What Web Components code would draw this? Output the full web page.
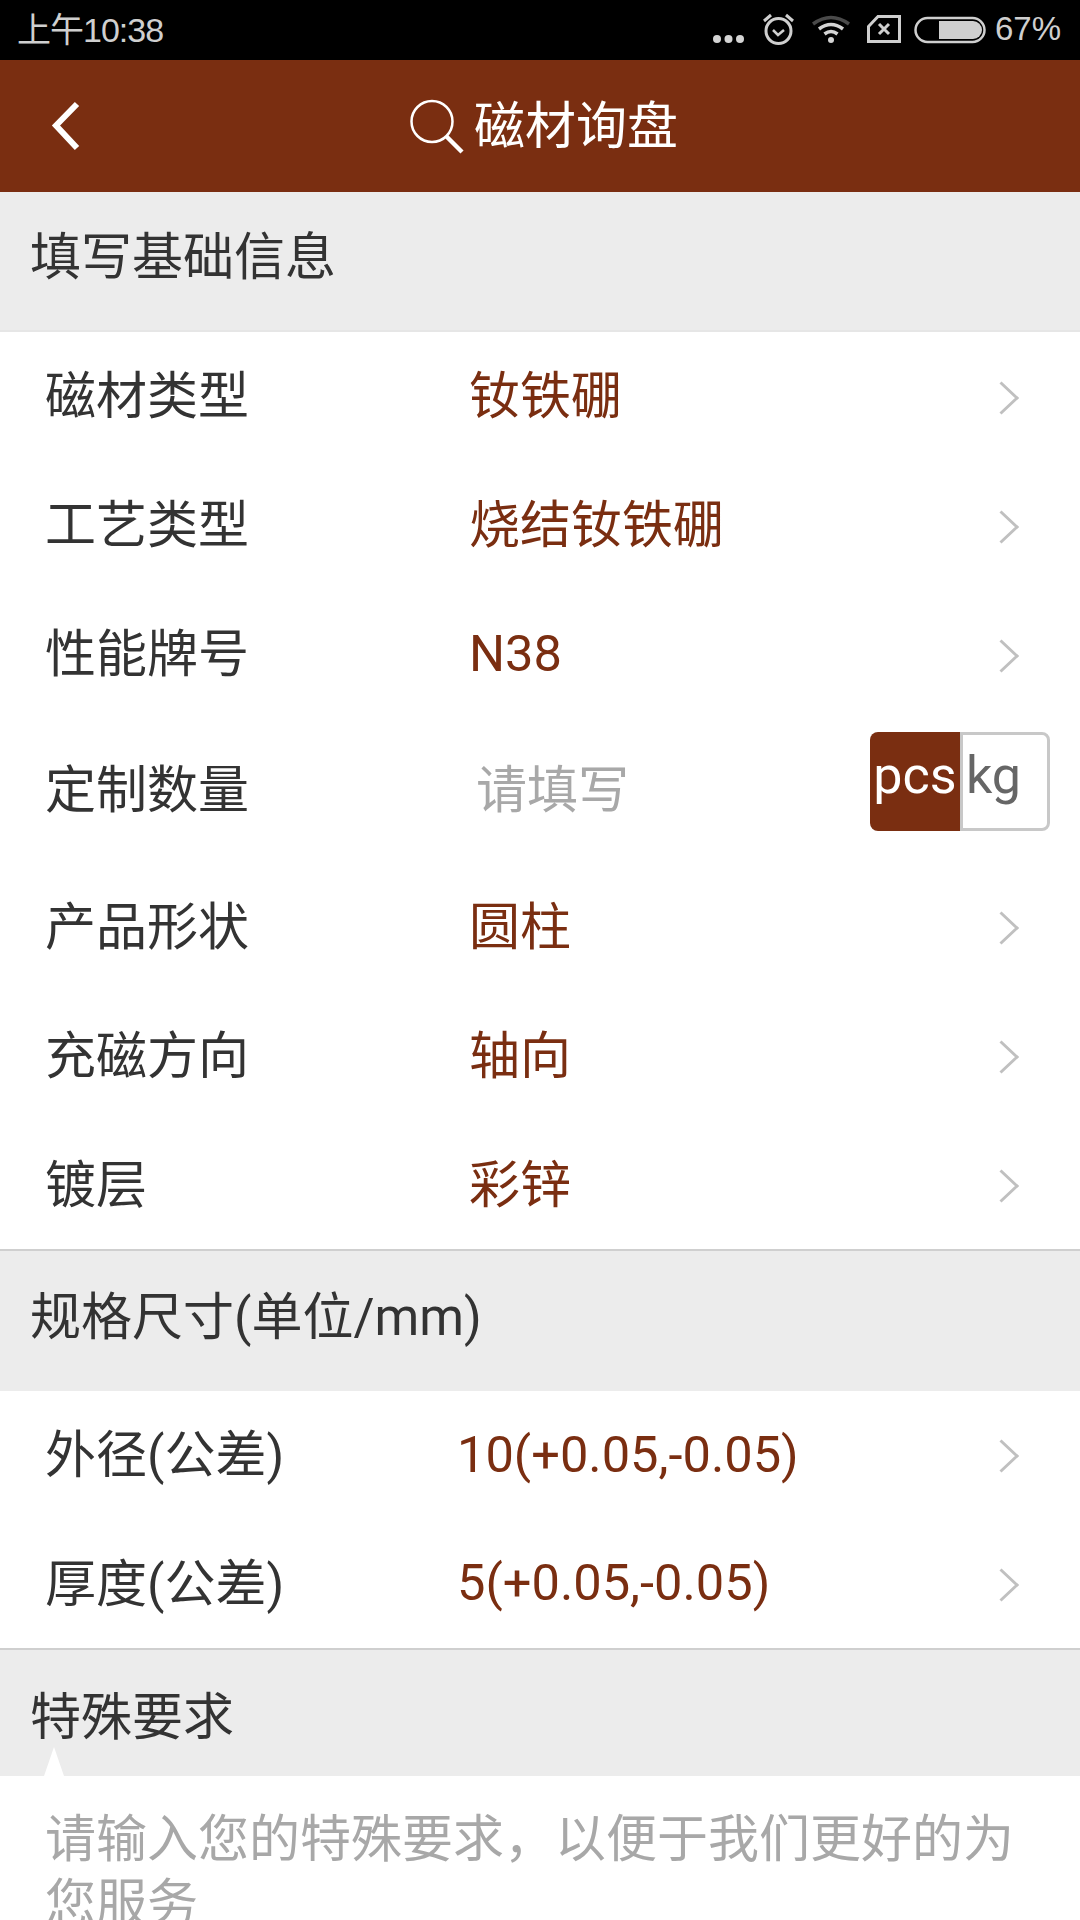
<!DOCTYPE html>
<html lang="zh">
<head>
<meta charset="utf-8">
<title>磁材询盘</title>
<style>
    html, body { margin: 0; height: 1920px; overflow: hidden; background: #fff; }
    body { font-family: Roboto, "Noto Sans CJK SC", sans-serif; display: flex; flex-flow: column; }
</style>
</head>
<body>
<status-bar></status-bar>
<app-toolbar>磁材询盘</app-toolbar>

<section-head height="140" lift="16">填写基础信息</section-head>
<form-row label="磁材类型" value="钕铁硼"></form-row>
<form-row label="工艺类型" value="烧结钕铁硼"></form-row>
<form-row label="性能牌号" value="N38" latin></form-row>
<form-row label="定制数量" placeholder="请填写" tall><unit-toggle></unit-toggle></form-row>
<form-row label="产品形状" value="圆柱" low></form-row>
<form-row label="充磁方向" value="轴向" low></form-row>
<form-row label="镀层" value="彩锌" low></form-row>

<section-head height="142" lift="17" ruled>规格尺寸(单位/mm)</section-head>
<form-row label="外径(公差)" value="10(+0.05,-0.05)" narrow latin></form-row>
<form-row label="厚度(公差)" value="5(+0.05,-0.05)" narrow latin></form-row>

<section-head height="128" ruled caret>特殊要求</section-head>
<note-box>请输入您的特殊要求，以便于我们更好的为您服务</note-box>

<script>
class StatusBar extends HTMLElement {
    constructor() {
        super();
        this.attachShadow({mode: 'open'});
        this.shadowRoot.innerHTML = `
            <style>
                :host {
                    display: flex;
                    flex: none;
                    height: 60px;
                    background: #000;
                    color: #cfcfcf;
                    align-items: center;
                    font-family: "Liberation Sans", "Noto Sans CJK SC", sans-serif;
                    font-size: 34px;
                    padding: 0 19px 0 17px;
                    box-sizing: border-box;
                }
                .time { flex: 1; letter-spacing: -1px; padding-bottom: 6px; }
                .pct { font-size: 33px; padding-bottom: 2px; }
                svg { display: block; flex: none; }
                .dots { margin-right: 17px; }
                .alarm { margin-right: 17px; }
                .wifi { margin-right: 17px; }
                .sim { margin-right: 13px; }
                .battery { margin-right: 9px; }
            </style>
            <span class="time">上午10:38</span>
            <svg class="dots" width="33" height="60" viewBox="0 0 33 60" fill="#d4d4d4">
                <circle cx="5" cy="39" r="4"/><circle cx="16.5" cy="39" r="4"/><circle cx="28" cy="39" r="4"/>
            </svg>
            <svg class="alarm" width="33" height="60" viewBox="0 0 33 60" fill="none" stroke="#cfcfcf">
                <circle cx="16.5" cy="31" r="12.5" stroke-width="3"/>
                <path d="M11 30l5 5 6-5" stroke-width="2.5"/>
                <path d="M2 21l7-6M31 21l-7-6" stroke-width="3"/>
            </svg>
            <svg class="wifi" width="38" height="60" viewBox="0 0 38 60" fill="none" stroke-width="3.5">
                <path d="M1 24Q19 11 37 24" stroke="#4a4a4a"/>
                <path d="M7 29Q19 20 31 29" stroke="#d4d4d4"/>
                <path d="M12.5 34Q19 29 25.500 34" stroke="#d4d4d4"/>
                <circle cx="19" cy="40" r="3" fill="#d4d4d4" stroke="none"/>
            </svg>
            <svg class="sim" width="34" height="60" viewBox="0 0 34 60" fill="none" stroke="#cfcfcf">
                <path d="M1.500 26.500L11 16.500H32.500V41.500H1.500Z" stroke-width="3"/>
                <path d="M12 24l10 10M22 24l-10 10" stroke-width="3"/>
            </svg>
            <svg class="battery" width="72" height="60" viewBox="0 0 72 60" fill="none">
                <rect x="1.500" y="18" width="69" height="24" rx="12" stroke="#cfcfcf" stroke-width="2.500"/>
                <path d="M25 21H59a9 9 0 0 1 0 18H25Z" fill="#cfcfcf"/>
            </svg>
            <span class="pct">67%</span>
        `;
    }
}

class AppToolbar extends HTMLElement {
    constructor() {
        super();
        this.attachShadow({mode: 'open'});
        this.shadowRoot.innerHTML = `
            <style>
                :host {
                    display: flex;
                    flex: none;
                    height: 132px;
                    background: #7a2e11;
                    color: #fff;
                    align-items: center;
                    font-size: 51px;
                    padding-left: 50px;
                    box-sizing: border-box;
                }
                svg { display: block; flex: none; }
                .back { margin-right: 330px; }
                .search { margin-right: 10px; }
                span { padding-bottom: 8px; }
            </style>
            <svg class="back" width="30" height="52" viewBox="0 0 30 52" fill="none" stroke="#fff" stroke-width="6">
                <path d="M27 4L6 25.500 27 48"/>
            </svg>
            <svg class="search" width="54" height="56" viewBox="0 0 54 56" fill="none" stroke="#fff">
                <circle cx="22" cy="23.500" r="20.500" stroke-width="2.500"/>
                <path d="M36 38L52 54" stroke-width="4.500"/>
            </svg>
            <span><slot></slot></span>
        `;
    }
}

class SectionHead extends HTMLElement {
    constructor() {
        super();
        this.attachShadow({mode: 'open'});
        this.shadowRoot.innerHTML = `
            <style>
                :host {
                    display: flex;
                    flex: none;
                    position: relative;
                    align-items: center;
                    background: #ececec;
                    color: #333;
                    font-size: 51px;
                    padding-left: 30px;
                    box-sizing: border-box;
                    border-bottom: 2px solid #e6e6e6;
                }
                :host([ruled]) { border-top: 2px solid #cfcfcf; border-bottom: none; }
                .caret {
                    display: none;
                    position: absolute;
                    left: 44px;
                    bottom: 0;
                    border: 10px solid transparent;
                    border-top: 0;
                    border-bottom: 29px solid #fff;
                }
                :host([caret]) .caret { display: block; }
            </style>
            <slot></slot>
            <div class="caret"></div>
        `;
    }

    connectedCallback() {
        this.style.height = this.getAttribute('height') + 'px';
        this.style.paddingBottom = (this.getAttribute('lift') || 0) + 'px';
    }
}

class FormRow extends HTMLElement {
    constructor() {
        super();
        this.attachShadow({mode: 'open'});
        this.shadowRoot.innerHTML = `
            <style>
                :host {
                    display: flex;
                    flex: none;
                    height: 129px;
                    background: #fff;
                    align-items: center;
                    font-size: 51px;
                    padding-left: 45px;
                    padding-right: 30px;
                    box-sizing: border-box;
                }
                :host([tall]) { height: 143px; }
                :host([narrow]) { height: 128.5px; }
                .label { width: 424px; flex: none; color: #333; padding-bottom: 10px; }
                :host([narrow]) .label { width: 412px; padding-bottom: 8px; }
                .value { flex: 1; color: #7a2e11; padding-bottom: 10px; }
                :host([low]) .label, :host([low]) .value { padding-bottom: 7px; }
                :host([latin]) .value { padding-bottom: 2px; font-size: 50.600px; }
                .value.empty { color: #a8a8a8; padding-left: 7px; }
                svg { display: block; flex: none; margin-right: 31px; margin-top: 2px; }
                :host([tall]) svg { display: none; }
            </style>
            <span class="label"></span>
            <span class="value"></span>
            <slot></slot>
            <svg width="20" height="34" viewBox="0 0 20 34" fill="none" stroke="#c0c0c0" stroke-width="3">
                <path d="M1.500 1.500L18 17 1.500 32.500"/>
            </svg>
        `;
    }

    connectedCallback() {
        this.shadowRoot.querySelector('.label').textContent = this.getAttribute('label');
        const value = this.shadowRoot.querySelector('.value');
        if (this.hasAttribute('placeholder')) {
            value.textContent = this.getAttribute('placeholder');
            value.classList.add('empty');
        } else {
            value.textContent = this.getAttribute('value');
        }
    }
}

class UnitToggle extends HTMLElement {
    constructor() {
        super();
        this.attachShadow({mode: 'open'});
        this.shadowRoot.innerHTML = `
            <style>
                :host {
                    display: flex;
                    flex: none;
                    align-self: flex-start;
                    margin-top: 13px;
                    width: 180px;
                    height: 99px;
                    font-size: 52px;
                    line-height: 88px;
                    box-sizing: border-box;
                }
                .on {
                    width: 90px;
                    background: #7a2e11;
                    color: #fff;
                    border-radius: 8px 0 0 8px;
                    text-align: center;
                }
                .off {
                    flex: 1;
                    color: #666;
                    border: 3px solid #c8c8c8;
                    border-radius: 0 8px 8px 0;
                    padding-left: 3px;
                    line-height: 82px;
                }
            </style>
            <div class="on">pcs</div>
            <div class="off">kg</div>
        `;
    }
}

class NoteBox extends HTMLElement {
    constructor() {
        super();
        this.attachShadow({mode: 'open'});
        this.shadowRoot.innerHTML = `
            <style>
                :host {
                    display: block;
                    flex: none;
                    background: #fff;
                    color: #a8a8a8;
                    font-family: "Noto Sans CJK TC", sans-serif;
                    font-size: 51px;
                    line-height: 64px;
                    padding: 27px 60px 0 45px;
                }
            </style>
            <slot></slot>
        `;
    }
}

customElements.define('status-bar', StatusBar);
customElements.define('app-toolbar', AppToolbar);
customElements.define('section-head', SectionHead);
customElements.define('form-row', FormRow);
customElements.define('unit-toggle', UnitToggle);
customElements.define('note-box', NoteBox);
</script>
</body>
</html>
